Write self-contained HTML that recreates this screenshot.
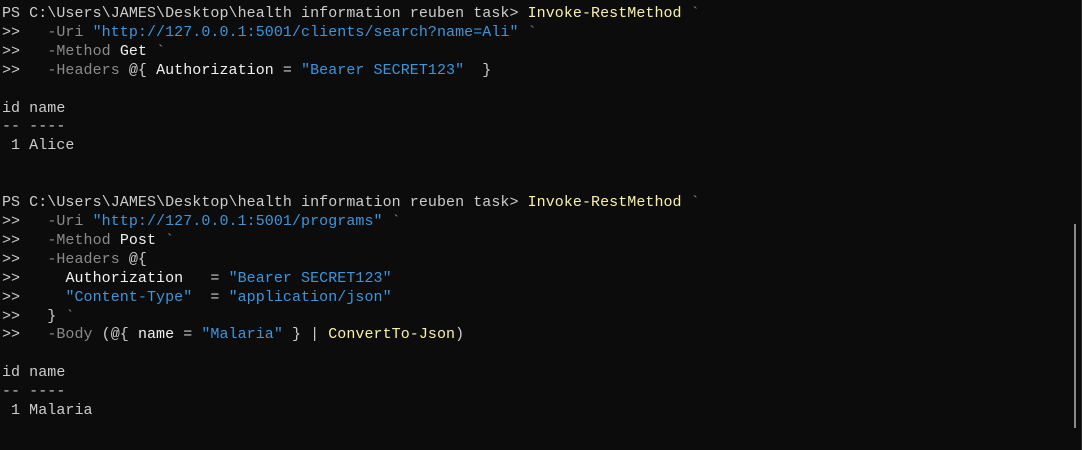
<!DOCTYPE html>
<html><head><meta charset="utf-8"><style>
html,body{margin:0;padding:0;background:#0c0c0c;width:1082px;height:450px;overflow:hidden;position:relative}
pre{margin:0;position:absolute;left:2px;top:5px;font-family:"Liberation Mono",monospace;font-size:15px;letter-spacing:0.06px;line-height:18.9px;color:#cccccc}
.y{color:#f9f1a5}.g{color:#8a8a8a}.b{color:#3a96dd}.w{color:#f2f2f2}
.sb{position:absolute;left:1074px;top:224px;width:2px;height:204px;background:#8a8a8a}
.edge{position:absolute;right:0;top:0;width:1px;height:450px;background:#2a2a2a}
</style></head><body>
<pre>PS C:\Users\JAMES\Desktop\health information reuben task&gt; <span class="y">Invoke-RestMethod</span> <span class="g">`</span>
&gt;&gt;   <span class="g">-Uri</span> <span class="b">"http://127.0.0.1:5001/clients/search?name=Ali"</span> <span class="g">`</span>
&gt;&gt;   <span class="g">-Method</span> <span class="w">Get</span> <span class="g">`</span>
&gt;&gt;   <span class="g">-Headers</span> @{ <span class="w">Authorization</span> = <span class="b">"Bearer SECRET123"</span>  }

id name
-- ----
 1 Alice


PS C:\Users\JAMES\Desktop\health information reuben task&gt; <span class="y">Invoke-RestMethod</span> <span class="g">`</span>
&gt;&gt;   <span class="g">-Uri</span> <span class="b">"http://127.0.0.1:5001/programs"</span> <span class="g">`</span>
&gt;&gt;   <span class="g">-Method</span> <span class="w">Post</span> <span class="g">`</span>
&gt;&gt;   <span class="g">-Headers</span> @{
&gt;&gt;     <span class="w">Authorization</span>   = <span class="b">"Bearer SECRET123"</span>
&gt;&gt;     <span class="b">"Content-Type"</span>  = <span class="b">"application/json"</span>
&gt;&gt;   } <span class="g">`</span>
&gt;&gt;   <span class="g">-Body</span> (@{ <span class="w">name</span> = <span class="b">"Malaria"</span> } | <span class="y">ConvertTo-Json</span>)

id name
-- ----
 1 Malaria
</pre>
<div class="sb"></div><div class="edge"></div>
</body></html>
